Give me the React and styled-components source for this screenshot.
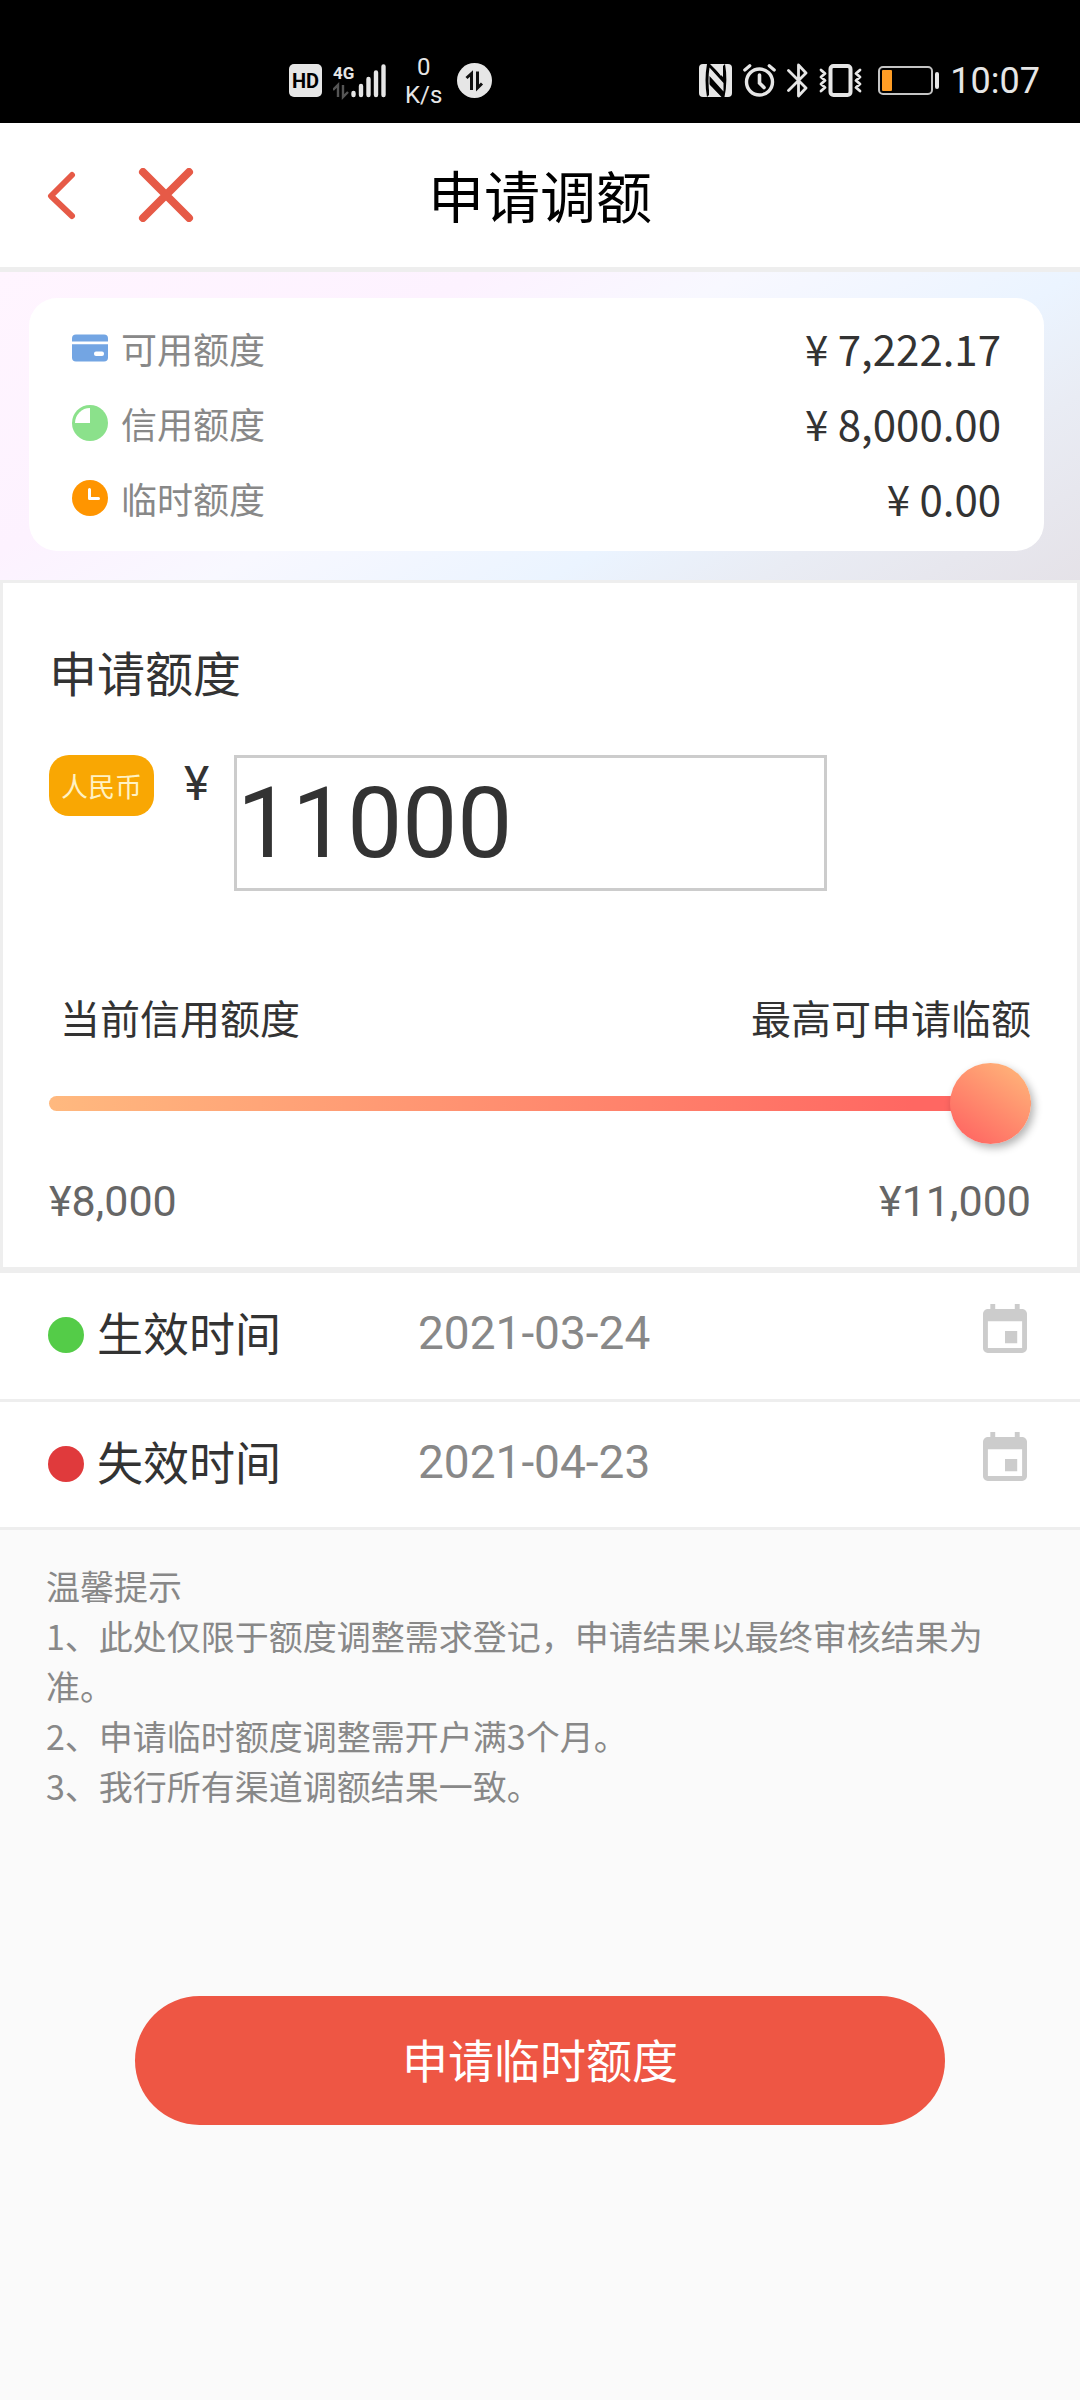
import React, { useState } from "react";
import styled, { createGlobalStyle } from "styled-components";

const CJK = `"Noto Sans CJK SC", "Noto Sans", sans-serif`;
const LATIN = `Roboto, "Noto Sans CJK SC", sans-serif`;

const Global = createGlobalStyle`
  *, *::before, *::after { box-sizing: border-box; }
  body { margin: 0; background: #fafafa; color: #333; font-family: ${CJK}; }
  h1, h2, p, dl, dt, dd { margin: 0; font-weight: 400; }
  button, input { font: inherit; color: inherit; margin: 0; padding: 0; border: 0; background: none; }
  button { cursor: pointer; }
  svg { display: block; flex: none; }
`;

const Page = styled.div`
  min-height: 100vh;
  background: #fafafa;
`;

const StatusBar = styled.div`
  display: flex;
  justify-content: space-between;
  align-items: center;
  height: 123px;
  padding: 38px 40px 0 289px;
  background: #000;
  color: #e6e6e6;
  font-family: ${LATIN};
`;

const StatusGroup = styled.div`
  display: flex;
  align-items: center;
  gap: ${(p) => p.$gap}px;
`;

const Speed = styled.div`
  margin: 0 0 0 3px;
  font-size: 24px;
  line-height: 28px;
  text-align: center;
`;

const Battery = styled.div`
  margin-left: 5px;
`;

const Clock = styled.time`
  font-size: 36px;
  line-height: 40px;
`;

const Header = styled.header`
  display: grid;
  grid-template-columns: 1fr auto 1fr;
  align-items: center;
  height: 149px;
  padding: 0 32px;
  background: #fff;
  border-bottom: 5px solid #eee;
`;

const HeaderActions = styled.div`
  display: flex;
  gap: 32px;
`;

const IconButton = styled.button`
  display: grid;
  place-items: center;
  width: ${(p) => p.$w}px;
  height: 72px;
`;

const Title = styled.h1`
  font-size: 56px;
  line-height: 78px;
  padding-bottom: 2px;
  color: #000;
`;

const Banner = styled.section`
  padding: 26px 36px 29px 29px;
  background: linear-gradient(150deg, #fff5ff 0%, #fdf2ff 30%, #f8f8ff 46%, #ebf4ff 67%, #e9ecf4 80%, #e5e2e8 100%);
`;

const QuotaCard = styled.dl`
  display: flex;
  flex-direction: column;
  padding: 12px 43px 16px;
  border-radius: 28px;
  background: #fff;
`;

const QuotaRow = styled.div`
  display: flex;
  align-items: center;
  justify-content: space-between;
  height: 75px;
`;

const QuotaName = styled.dt`
  display: flex;
  align-items: center;
  gap: 13px;
  font-size: 36px;
  line-height: 48px;
  color: #888;
`;

const QuotaValue = styled.dd`
  font-size: 42px;
  line-height: 60px;
`;

const ApplyPanel = styled.section`
  padding: 54px 46px 36px;
  background: #fff;
  border: 3px solid #eee;
  border-bottom-width: 6px;
`;

const PanelTitle = styled.h2`
  font-size: 48px;
  line-height: 68px;
`;

const AmountRow = styled.div`
  display: flex;
  align-items: flex-start;
  margin-top: 50px;
`;

const Currency = styled.span`
  width: 105px;
  border-radius: 20px;
  background: #f9a703;
  color: #fff2c4;
  font-size: 27px;
  line-height: 61px;
  text-align: center;
`;

const Yen = styled.label`
  width: 80px;
  padding-left: 30px;
  font-family: ${LATIN};
  font-size: 48px;
  line-height: 58px;
`;

const AmountInput = styled.input`
  flex: 0 1 593px;
  min-width: 0;
  && {
    padding: 0;
    border: 3px solid #ccc;
  }
  height: 136px;
  font-family: ${LATIN};
  font-size: 98px;
`;

const Between = styled.div`
  display: flex;
  justify-content: space-between;
`;

const RangeLabels = styled(Between)`
  margin-top: 96px;
  padding-left: 11px;
  font-size: 40px;
  line-height: 60px;
`;

const Slider = styled.input`
  display: block;
  appearance: none;
  width: 100%;
  height: 81px;
  && { margin: 16px 0 27px; }

  &::-webkit-slider-runnable-track {
    height: 15px;
    border-radius: 8px;
    background: linear-gradient(90deg, #ffb97f 0%, #ff6762 88%);
  }

  &::-webkit-slider-thumb {
    appearance: none;
    width: 81px;
    height: 81px;
    margin-top: -33px;
    border-radius: 50%;
    background: linear-gradient(215deg, #ffb078 12%, #ff6562 92%);
    box-shadow: 3px 4px 8px rgba(0, 0, 0, 0.3);
  }
`;

const RangeValues = styled(Between)`
  font-family: ${LATIN};
  font-size: 43px;
  line-height: 60px;
  color: #666;
`;

const DateRow = styled.div`
  display: flex;
  align-items: center;
  height: ${(p) => p.$height}px;
  padding: 0 53px 6px 48px;
  background: #fff;
  border-bottom: 3px solid #eee;
`;

const DateLabel = styled.label`
  display: flex;
  align-items: center;
  gap: 13px;
  width: 370px;
  padding-bottom: 4px;
  font-size: 46px;
  line-height: 66px;

  &::before {
    content: "";
    width: 36px;
    height: 36px;
    margin-top: 8px;
    border-radius: 50%;
    background: ${(p) => p.$dot};
  }
`;

const DateInput = styled.input`
  flex: 1;
  min-width: 0;
  && { color: #888; }
  font-family: ${LATIN};
  font-size: 46px;
  line-height: 60px;
`;

const CalendarButton = styled.button`
  && { padding-bottom: 10px; }
`;

const Tips = styled.section`
  padding: 31px 50px 0 46px;
  font-size: 34px;
  line-height: 50px;
  color: #888;
`;

const Submit = styled.button`
  && {
    display: block;
    width: 75%;
    height: 129px;
    margin: 185px auto 0;
    padding-bottom: 6px;
    border-radius: 65px;
    background: #ee5644;
    color: #fff;
  }
  font-size: 46px;
`;

const FG = "#e6e6e6";

const HdIcon = () => (
  <svg width="33" height="33" viewBox="0 0 33 33" fontFamily="Roboto, sans-serif">
    <rect width="33" height="33" rx="5" fill={FG} />
    <text x="16.5" y="24" fontSize="20" fontWeight="700" textAnchor="middle" fill="#000">HD</text>
  </svg>
);

const SignalIcon = () => (
  <svg width="54" height="46" viewBox="0 -6 54 46" fontFamily="Roboto, sans-serif">
    <text x="0" y="15" fontSize="17" fontWeight="700" fill={FG}>4G</text>
    <path d="M0 26l5-5v12M10 21v12l5-5" fill="none" stroke="#555" strokeWidth="2.4" />
    <path d="M20.5 29v2M28 22v9M35.5 15v16M43 8.500v22.5M50.500 2.500v28.500" stroke={FG} strokeWidth="4.400" strokeLinecap="round" />
  </svg>
);

const DataIcon = () => (
  <svg width="35" height="35" viewBox="0 0 35 35">
    <circle cx="17.5" cy="17.5" r="17.5" fill={FG} />
    <path d="M9.500 15l5-4.500V27M20.500 8.500V25l4.500-4.500" fill="none" stroke="#111" strokeWidth="3" />
  </svg>
);

const NfcIcon = () => (
  <svg width="33" height="33" viewBox="0 0 33 33">
    <rect width="33" height="33" rx="4" fill={FG} />
    <path d="M8 0h3l13 13V2l2-2Q29 16 25.500 33h-3L10 20v11l-2 2Q5 16 8 0z" fill="#000" />
    <path d="M10.500 3.500Q8.500 16 10.500 31V12l14 15.500V19zM13 0h9v12zM12.500 33V23l9 10z" fill={FG} />
  </svg>
);

const AlarmIcon = () => (
  <svg width="33" height="33" viewBox="0 0 33 33" fill="none" stroke={FG} strokeLinecap="round">
    <circle cx="16.5" cy="18" r="13" strokeWidth="3.4" />
    <path d="M16.500 11v8l4.500 4.500" strokeWidth="3.6" />
    <path d="M1.800 6l5-4.200M31.200 6l-5-4.200" strokeWidth="3.2" />
  </svg>
);

const BluetoothIcon = () => (
  <svg width="21" height="35" viewBox="0 0 21 35" fill="none" stroke={FG} strokeWidth="2.800" strokeLinejoin="round" strokeLinecap="round">
    <path d="M1.500 7.500L19 25l-7.500 8V2L19 10 1.500 27.500" />
  </svg>
);

const VibrateIcon = () => (
  <svg width="43" height="33" viewBox="0 0 43 33" fill="none" stroke={FG} strokeLinejoin="round" strokeLinecap="round">
    <rect x="11.500" y="2" width="20" height="29" rx="3" strokeWidth="4" />
    <path d="M2 6l4 3.500-4 3.500 4 3.500-4 3.500 4 3.500-4 3.500M41 6l-4 3.500 4 3.500-4 3.500 4 3.500-4 3.500 4 3.500" strokeWidth="2.800" />
  </svg>
);

const BatteryIcon = () => (
  <svg width="61" height="29" viewBox="0 0 61 29">
    <rect x="1" y="1" width="53" height="27" rx="4" fill="none" stroke="#c4c4c4" strokeWidth="2" />
    <rect x="4" y="4" width="10" height="21" rx="1" fill="#ff9d25" />
    <rect x="57" y="6" width="4" height="17" rx="2" fill={FG} />
  </svg>
);

const BackIcon = () => (
  <svg width="30" height="50" viewBox="0 0 30 50" fill="none" stroke="#e65a47" strokeWidth="6" strokeLinecap="round" strokeLinejoin="round">
    <path d="M25 5L4 26l21 20" />
  </svg>
);

const CloseIcon = () => (
  <svg width="56" height="54" viewBox="0 0 56 54" fill="none" stroke="#e65a47" strokeWidth="8" strokeLinecap="round">
    <path d="M5 4l46 46M51 4L5 50" />
  </svg>
);

const CardIcon = () => (
  <svg width="36" height="36" viewBox="0 0 36 36">
    <rect y="4.500" width="36" height="27" rx="4" fill="#73a5e3" />
    <path d="M0 12.800h36" stroke="#fff" strokeWidth="2.800" />
    <rect x="22" y="21.500" width="10" height="4.500" rx="2" fill="#fff" />
  </svg>
);

const PieIcon = () => (
  <svg width="36" height="36" viewBox="0 0 36 36">
    <circle cx="18" cy="18" r="18" fill="#8be18b" />
    <path d="M18 3v15H3A15 15 0 0 1 18 3z" fill="#fff" />
  </svg>
);

const ClockIcon = () => (
  <svg width="36" height="36" viewBox="0 0 36 36">
    <circle cx="18" cy="18" r="18" fill="#ff9500" />
    <path d="M17.500 9.500V18.500H26.500" fill="none" stroke="#fff" strokeWidth="3" strokeLinecap="round" strokeLinejoin="round" />
  </svg>
);

const CalendarIcon = () => (
  <svg width="44" height="49" viewBox="3 1 18 20" fill="#ccc">
    <path d="M17 12h-5v5h5v-5zM16 1v2H8V1H6v2H5c-1.110 0-1.990.9-1.990 2L3 19c0 1.100.89 2 2 2h14c1.100 0 2-.9 2-2V5c0-1.100-.9-2-2-2h-1V1h-2zm3 18H5V8h14v11z" />
  </svg>
);

const QUOTAS = [
  { icon: CardIcon, name: "可用额度", value: "¥ 7,222.17" },
  { icon: PieIcon, name: "信用额度", value: "¥ 8,000.00" },
  { icon: ClockIcon, name: "临时额度", value: "¥ 0.00" },
];

const DATES = [
  { id: "start", label: "生效时间", dot: "#54cc48", value: "2021-03-24", height: 129 },
  { id: "end", label: "失效时间", dot: "#e03a3c", value: "2021-04-23", height: 128 },
];

const TIPS = [
  "温馨提示",
  "1、此处仅限于额度调整需求登记，申请结果以最终审核结果为准。",
  "2、申请临时额度调整需开户满3个月。",
  "3、我行所有渠道调额结果一致。",
];

export default function App() {
  const [amount, setAmount] = useState("11000");
  const onAmount = (e) => setAmount(e.target.value);

  return (
    <Page>
      <Global />
      <StatusBar>
        <StatusGroup $gap={15}>
          <StatusGroup $gap={11}>
            <HdIcon />
            <SignalIcon />
          </StatusGroup>
          <Speed>0<br />K/s</Speed>
          <DataIcon />
        </StatusGroup>
        <StatusGroup $gap={11}>
          <NfcIcon />
          <AlarmIcon />
          <BluetoothIcon />
          <VibrateIcon />
          <Battery><BatteryIcon /></Battery>
          <Clock>10:07</Clock>
        </StatusGroup>
      </StatusBar>

      <Header>
        <HeaderActions>
          <IconButton type="button" aria-label="返回" $w={60}><BackIcon /></IconButton>
          <IconButton type="button" aria-label="关闭" $w={84}><CloseIcon /></IconButton>
        </HeaderActions>
        <Title>申请调额</Title>
      </Header>

      <main>
        <Banner>
          <QuotaCard>
            {QUOTAS.map(({ icon: Icon, name, value }) => (
              <QuotaRow key={name}>
                <QuotaName><Icon />{name}</QuotaName>
                <QuotaValue>{value}</QuotaValue>
              </QuotaRow>
            ))}
          </QuotaCard>
        </Banner>

        <ApplyPanel>
          <PanelTitle>申请额度</PanelTitle>
          <AmountRow>
            <Currency>人民币</Currency>
            <Yen htmlFor="amount">¥</Yen>
            <AmountInput id="amount" type="text" inputMode="numeric" value={amount} onChange={onAmount} />
          </AmountRow>
          <RangeLabels>
            <label htmlFor="range">当前信用额度</label>
            <span>最高可申请临额</span>
          </RangeLabels>
          <Slider id="range" type="range" min="8000" max="11000" step="100" value={amount} onChange={onAmount} />
          <RangeValues>
            <span>¥8,000</span>
            <span>¥11,000</span>
          </RangeValues>
        </ApplyPanel>

        {DATES.map((d) => (
          <DateRow key={d.id} $height={d.height}>
            <DateLabel htmlFor={d.id} $dot={d.dot}>{d.label}</DateLabel>
            <DateInput id={d.id} type="text" readOnly value={d.value} />
            <CalendarButton type="button" aria-label={`选择${d.label}`}><CalendarIcon /></CalendarButton>
          </DateRow>
        ))}

        <Tips>
          {TIPS.map((t) => <p key={t}>{t}</p>)}
        </Tips>

        <Submit type="button">申请临时额度</Submit>
      </main>
    </Page>
  );
}
